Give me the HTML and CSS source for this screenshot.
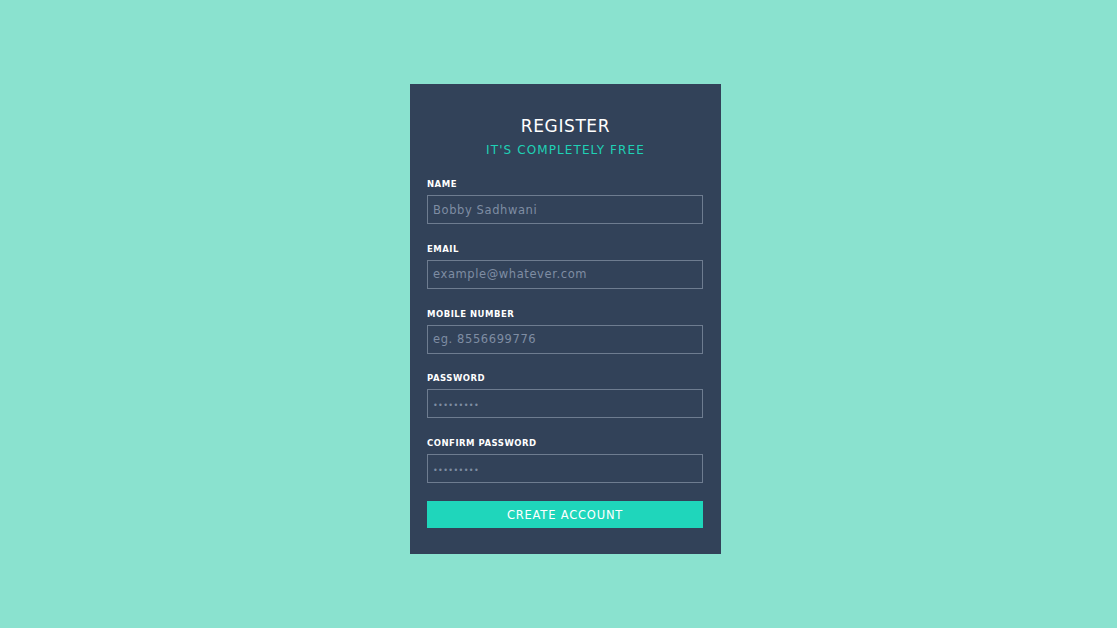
FILE: index.html
```html
<!DOCTYPE html>
<html lang="en">
<head>
<meta charset="utf-8">
<title>Register</title>
<link rel="stylesheet" href="styles.css">
</head>
<body>
<div class="page">
  <form class="card">
    <div class="head">
      <h1 class="title">REGISTER</h1>
      <p class="subtitle">IT'S COMPLETELY FREE</p>
    </div>
    <div class="field">
      <label class="label">NAME</label>
      <input class="input" type="text" placeholder="Bobby Sadhwani">
    </div>
    <div class="field">
      <label class="label">EMAIL</label>
      <input class="input" type="text" placeholder="example@whatever.com">
    </div>
    <div class="field">
      <label class="label">MOBILE NUMBER</label>
      <input class="input" type="text" placeholder="eg. 8556699776">
    </div>
    <div class="field">
      <label class="label">PASSWORD</label>
      <input class="input pw" type="text" placeholder="•••••••••">
    </div>
    <div class="field">
      <label class="label">CONFIRM PASSWORD</label>
      <input class="input pw" type="text" placeholder="•••••••••">
    </div>
    <button class="btn" type="button">CREATE ACCOUNT</button>
  </form>
</div>
</body>
</html>
```
FILE: styles.css
```css
html, body {
  margin: 0;
  padding: 0;
}
body {
  background: #8ae2cf;
  width: 1117px;
  height: 628px;
  overflow: hidden;
  font-family: "DejaVu Sans", "Liberation Sans", sans-serif;
}
.page {
  padding: 84px 0 0 410px;
}
.card {
  width: 311px;
  box-sizing: border-box;
  background: #324259;
  padding: 31px 17px 26px 17px;
  display: flex;
  flex-direction: column;
}
.head {
  text-align: center;
  margin-bottom: 20px;
}
.title {
  margin: 0;
  font-weight: normal;
  font-size: 17px;
  line-height: 22px;
  letter-spacing: 0.6px;
  color: #ffffff;
}
.subtitle {
  margin: 5px 0 0 0;
  font-size: 12px;
  line-height: 16px;
  letter-spacing: 1.1px;
  color: #1fd1b5;
}
.field {
  display: flex;
  flex-direction: column;
  margin-bottom: 18.75px;
}
.label {
  font-size: 8.5px;
  line-height: 12px;
  font-weight: bold;
  letter-spacing: 0.5px;
  color: #ffffff;
  margin-bottom: 5px;
}
.input {
  box-sizing: border-box;
  width: 276px;
  height: 29px;
  margin: 0;
  padding: 0 5px;
  background: transparent;
  border: 1px solid #6e7c90;
  border-radius: 0;
  color: #c9d3e0;
  font-family: "DejaVu Sans", "Liberation Sans", sans-serif;
  font-size: 11.5px;
  letter-spacing: 0.6px;
  outline: none;
}
.input::placeholder {
  color: #7f8da3;
}
.pw::placeholder {
  font-size: 8px;
  letter-spacing: 0.4px;
}
.btn {
  margin-top: -0.75px;
  width: 276px;
  height: 27px;
  border: none;
  border-radius: 0;
  background: #1fd6bb;
  color: #ffffff;
  font-family: "DejaVu Sans", "Liberation Sans", sans-serif;
  font-size: 11.5px;
  letter-spacing: 0.8px;
  padding: 0;
  cursor: pointer;
}
```
